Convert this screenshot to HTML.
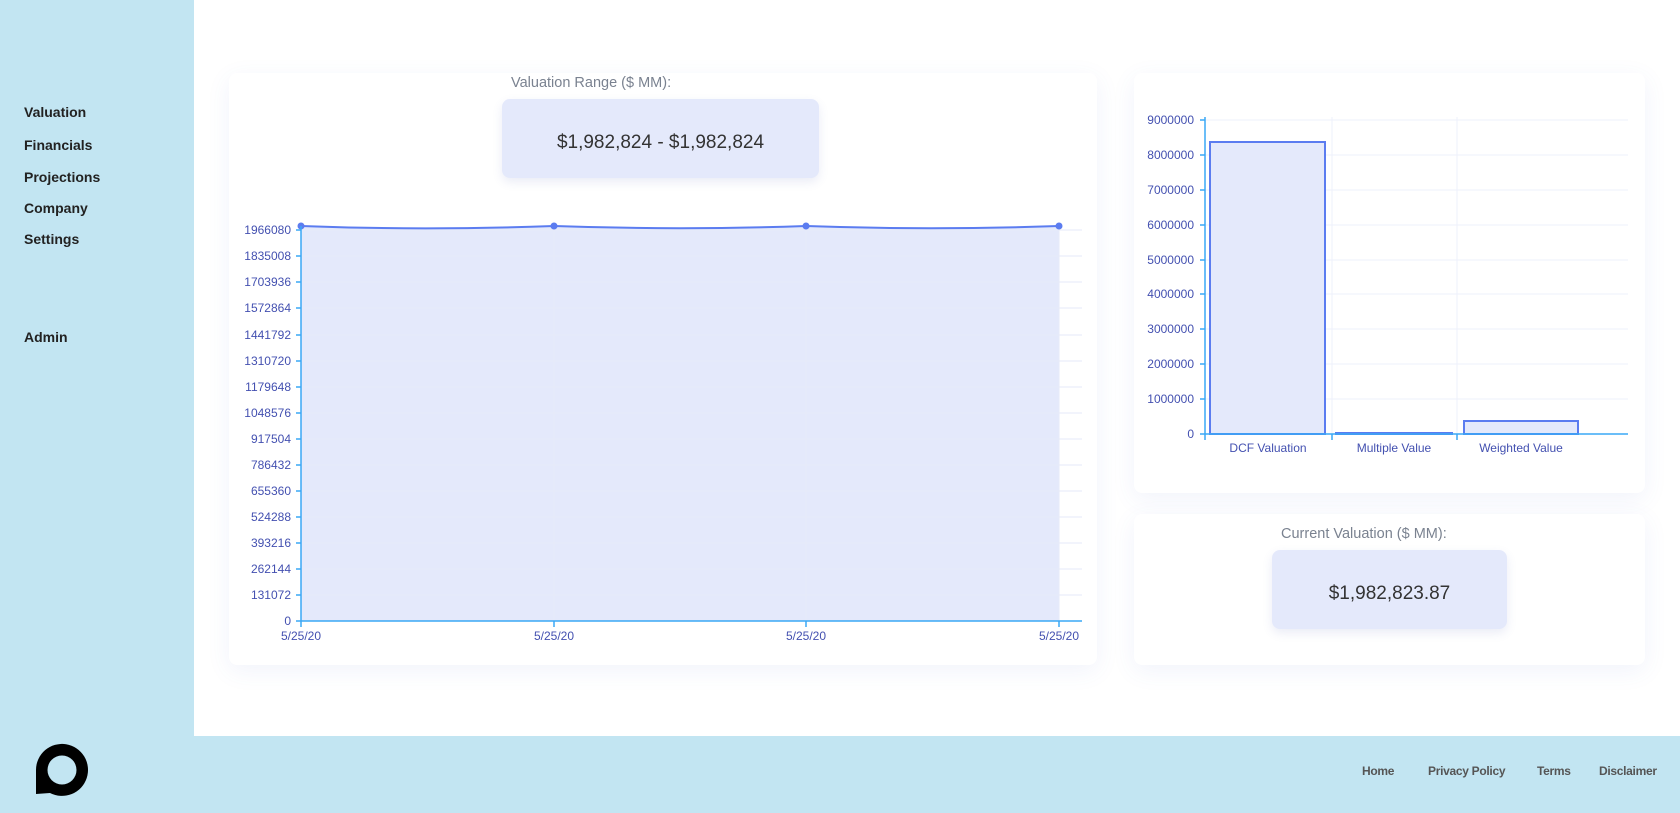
<!DOCTYPE html>
<html><head><meta charset="utf-8"><style>
*{margin:0;padding:0;box-sizing:border-box}
body{width:1680px;height:813px;overflow:hidden;background:#fff;font-family:"Liberation Sans",sans-serif;position:relative}
.side{position:absolute;left:0;top:0;width:194px;height:813px;background:#c2e5f2}
.foot{position:absolute;left:0;top:736px;width:1680px;height:77px;background:#c2e5f2}
.nav{position:absolute;left:24px;font-weight:bold;font-size:14px;color:#222}
.card{position:absolute;background:#fff;border-radius:8px;box-shadow:0 6px 24px rgba(80,100,200,0.08)}
.lbl{position:absolute;font-size:14.5px;color:#7a8290;white-space:nowrap}
.box{position:absolute;background:#e4e9fb;border-radius:8px;box-shadow:0 4px 10px rgba(80,100,180,0.12);font-size:19px;color:#333;display:flex;align-items:center;justify-content:center;padding-top:8px}
.fl{position:absolute;top:764px;font-size:12px;font-weight:bold;color:#555;letter-spacing:-0.3px}
svg text{font-family:"Liberation Sans",sans-serif;font-size:12px;fill:#4350b0}
</style></head><body>
<div class="side"></div>
<div class="foot"></div>
<div class="nav" style="top:104px">Valuation</div>
<div class="nav" style="top:137px">Financials</div>
<div class="nav" style="top:169px">Projections</div>
<div class="nav" style="top:200px">Company</div>
<div class="nav" style="top:231px">Settings</div>
<div class="nav" style="top:329px">Admin</div>
<svg style="position:absolute;left:0;top:730px" width="120" height="83"><path d="M36 64 L36 40 A26 26 0 1 1 50 63 L36 64 Z" fill="#000"/><circle cx="62" cy="40" r="14.5" fill="#c2e5f2"/></svg>
<div class="fl" style="left:1362px">Home</div>
<div class="fl" style="left:1428px">Privacy Policy</div>
<div class="fl" style="left:1537px">Terms</div>
<div class="fl" style="left:1599px">Disclaimer</div>

<div class="card" style="left:229px;top:73px;width:868px;height:592px"></div>
<div class="card" style="left:1134px;top:73px;width:511px;height:420px"></div>
<div class="card" style="left:1134px;top:514px;width:511px;height:151px"></div>

<div class="lbl" style="left:511px;top:75px">Valuation Range ($ MM):</div>
<div class="box" style="left:502px;top:99px;width:317px;height:79px">$1,982,824 - $1,982,824</div>
<div class="lbl" style="left:1281px;top:526px">Current Valuation ($ MM):</div>
<div class="box" style="left:1272px;top:550px;width:235px;height:79px">$1,982,823.87</div>

<svg style="position:absolute;left:0;top:0" width="1680" height="813">
<g id="lc">
<path d="M301 226 C380 229 470 229 554 226 C640 229 720 229 806 226 C890 229 970 229 1059 226 L1059 621 L301 621 Z" fill="#e4e9fb"/>
<g stroke="#e6eaf8" stroke-width="1">
<line x1="301" y1="230" x2="1082" y2="230"/><line x1="301" y1="256" x2="1082" y2="256"/><line x1="301" y1="282" x2="1082" y2="282"/><line x1="301" y1="308" x2="1082" y2="308"/><line x1="301" y1="335" x2="1082" y2="335"/><line x1="301" y1="361" x2="1082" y2="361"/><line x1="301" y1="387" x2="1082" y2="387"/><line x1="301" y1="413" x2="1082" y2="413"/><line x1="301" y1="439" x2="1082" y2="439"/><line x1="301" y1="465" x2="1082" y2="465"/><line x1="301" y1="491" x2="1082" y2="491"/><line x1="301" y1="517" x2="1082" y2="517"/><line x1="301" y1="543" x2="1082" y2="543"/><line x1="301" y1="569" x2="1082" y2="569"/><line x1="301" y1="595" x2="1082" y2="595"/>
<line x1="554" y1="226" x2="554" y2="621"/><line x1="806" y1="226" x2="806" y2="621"/><line x1="1059" y1="226" x2="1059" y2="621"/>
</g>
<path d="M301 226 C380 229 470 229 554 226 C640 229 720 229 806 226 C890 229 970 229 1059 226" fill="none" stroke="#5b7cf0" stroke-width="2"/>
<g fill="#5b7cf0"><circle cx="301" cy="226" r="3.5"/><circle cx="554" cy="226" r="3.5"/><circle cx="806" cy="226" r="3.5"/><circle cx="1059" cy="226" r="3.5"/></g>
<g stroke="#3aa8f5" stroke-width="1.5"><line x1="301" y1="226" x2="301" y2="627"/><line x1="296" y1="621" x2="1082" y2="621"/>
<path d="M296 230h5M296 256h5M296 282h5M296 308h5M296 335h5M296 361h5M296 387h5M296 413h5M296 439h5M296 465h5M296 491h5M296 517h5M296 543h5M296 569h5M296 595h5M554 621v6M806 621v6M1059 621v6"/></g>
<g text-anchor="end">
<text x="291" y="234">1966080</text><text x="291" y="260">1835008</text><text x="291" y="286">1703936</text><text x="291" y="312">1572864</text><text x="291" y="339">1441792</text><text x="291" y="365">1310720</text><text x="291" y="391">1179648</text><text x="291" y="417">1048576</text><text x="291" y="443">917504</text><text x="291" y="469">786432</text><text x="291" y="495">655360</text><text x="291" y="521">524288</text><text x="291" y="547">393216</text><text x="291" y="573">262144</text><text x="291" y="599">131072</text><text x="291" y="625">0</text>
</g>
<g text-anchor="middle"><text x="301" y="640">5/25/20</text><text x="554" y="640">5/25/20</text><text x="806" y="640">5/25/20</text><text x="1059" y="640">5/25/20</text></g>
</g>
<g id="bc">
<g stroke="#eef0fb" stroke-width="1">
<path d="M1205 120H1628M1205 155H1628M1205 190H1628M1205 225H1628M1205 260H1628M1205 294H1628M1205 329H1628M1205 364H1628M1205 399H1628M1332 117V434M1457 117V434"/>
</g>
<rect x="1210" y="142" width="115" height="292" fill="#e4e9fb" stroke="#5b7cf0" stroke-width="2"/>
<rect x="1336" y="433" width="116" height="1" fill="#5b7cf0" stroke="#5b7cf0" stroke-width="2"/>
<rect x="1464" y="421" width="114" height="13" fill="#e4e9fb" stroke="#5b7cf0" stroke-width="2"/>
<g stroke="#3aa8f5" stroke-width="1.5"><line x1="1205" y1="117" x2="1205" y2="440"/><line x1="1200" y1="434" x2="1628" y2="434"/>
<path d="M1200 120h5M1200 155h5M1200 190h5M1200 225h5M1200 260h5M1200 294h5M1200 329h5M1200 364h5M1200 399h5M1332 434v6M1457 434v6"/></g>
<g text-anchor="end">
<text x="1194" y="124">9000000</text><text x="1194" y="159">8000000</text><text x="1194" y="194">7000000</text><text x="1194" y="229">6000000</text><text x="1194" y="264">5000000</text><text x="1194" y="298">4000000</text><text x="1194" y="333">3000000</text><text x="1194" y="368">2000000</text><text x="1194" y="403">1000000</text><text x="1194" y="438">0</text>
</g>
<g text-anchor="middle"><text x="1268" y="452">DCF Valuation</text><text x="1394" y="452">Multiple Value</text><text x="1521" y="452">Weighted Value</text></g>
</g>
</svg>
</body></html>
